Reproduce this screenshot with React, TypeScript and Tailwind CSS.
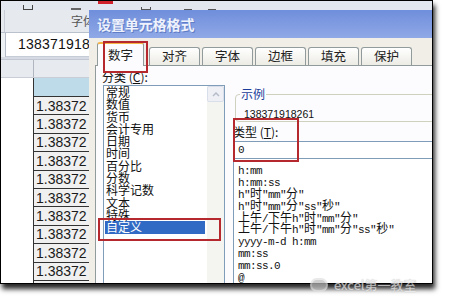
import React from 'react';

const categories = ['常规', '数值', '货币', '会计专用', '日期', '时间', '百分比', '分数', '科学记数', '文本', '特殊', '自定义'];

const formats = [
  'h:mm',
  'h:mm:ss',
  'h"时"mm"分"',
  'h"时"mm"分"ss"秒"',
  '上午/下午h"时"mm"分"',
  '上午/下午h"时"mm"分"ss"秒"',
  'yyyy-m-d h:mm',
  'mm:ss',
  'mm:ss.0',
  '@',
  '[h]:mm:ss',
];

const tabs = ['对齐', '字体', '边框', '填充', '保护'];

// mixed SimSun-like line: narrow ascii, square CJK
const FormatLine = ({ text }: { text: string }) => {
  const runs = text.match(/[\u4e00-\u9fff]+|[^\u4e00-\u9fff]+/g) || [];
  return (
    <div className="h-[11.9px] leading-[11.9px] whitespace-nowrap">
      {runs.map((r, i) =>
        /[\u4e00-\u9fff]/.test(r) ? (
          <span key={i} className="font-['Noto_Sans_CJK_SC',sans-serif] text-[12px]">
            {r}
          </span>
        ) : (
          <span key={i} className="font-['Liberation_Mono',monospace] text-[11px] tracking-[-0.6px]">
            {r}
          </span>
        )
      )}
    </div>
  );
};

const App: React.FC = () => {
  return (
    <div className="w-[454px] h-[306px] bg-white relative overflow-hidden">
      <div className="w-[433px] h-[284px] relative overflow-hidden border border-black bg-white shadow-[2px_5px_5px_rgba(0,0,0,0.85)]">
        {/* ribbon strip, mostly cut off */}
        <div className="h-[9px] bg-[#e2e7ef] flex items-end overflow-hidden text-[#333]">
          <div className="ml-[22px] w-[10px] h-[5px] border border-[#444] border-t-0" />
          <div className="ml-[38px] w-[10px] h-[4px] border-b-2 border-[#666]" />
          <div className="ml-[17px] w-[15px] h-[9px] flex flex-col justify-start">
            <div className="h-[3px] bg-[#d0202a]" />
          </div>
          <div className="ml-[28px] w-[10px] h-[3px] border-b border-l border-r border-[#555]" />
          <div className="ml-[33px] w-[8px] h-[4px] border-b border-[#555]" />
          <div className="ml-[16px] w-[8px] h-[4px] border-b border-[#555]" />
        </div>
        {/* group label row */}
        <div className="h-[23px] bg-[#e6e9ee] flex items-center border-b border-[#b9c1cd]">
          <div className="w-[4px] h-full border-r border-[#c9ced6]" />
          <span className="ml-[66px] font-['Noto_Sans_CJK_SC',sans-serif] text-[12px] text-[#555] leading-none">字体</span>
        </div>
        {/* formula bar */}
        <div className="h-[24px] bg-[#eef1f4] flex">
          <div className="w-[5px] border-r border-[#b5bcc8]" />
          <div className="flex-1 bg-white flex items-center pl-[12px] border-b border-[#c6ccd6]">
            <span className="font-['Liberation_Sans',Arial,sans-serif] text-[14px] text-[#111] tracking-[0.2px]">138371918261</span>
          </div>
        </div>
        <div className="h-[2px] bg-[#d6dbe3]" />
        {/* header row */}
        <div className="h-[18px] bg-[#e7eaef] flex border-t border-[#c2c8d2]">
          <div className="w-[33px] border-r border-[#b0b6c0]" />
        </div>
        <div className="h-[19px] flex border-t border-[#c9ced6]">
          <div className="w-[33px] bg-white border-r border-[#333]" />
          <div className="w-[56px] bg-[#bddbe8]" />
        </div>
        {/* cells */}
        {Array.from({ length: 11 }).map((_, i) => (
          <div key={i} className="h-[18.4px] flex">
            <div className="w-[33px] bg-white border-r border-[#333]" />
            <div className="w-[56px] bg-[#f0f0f0] border-t border-[#333] flex items-center pl-[2px] overflow-hidden">
              <span className="font-['Liberation_Sans',Arial,sans-serif] text-[14px] text-[#1a1a1a] leading-none">1.38372</span>
            </div>
          </div>
        ))}

        {/* dialog window */}
        <div className="absolute left-[88px] top-[9px] w-[346px] h-[276px] flex flex-col">
          <div className="h-[28px] shrink-0 bg-gradient-to-b from-[#6f8edb] to-[#90a8e6] flex items-center pl-[8px]">
            <span className="font-['Noto_Sans_CJK_SC',sans-serif] text-[14px] font-bold text-[#eef2fc] tracking-[-0.1px] [text-shadow:1px_1px_0_#5f7cc6]">
              设置单元格格式
            </span>
          </div>
          <div className="flex-1 min-h-0 flex">
            <div className="w-[4px] bg-[#a6b1e4]" />
            <div className="flex-1 min-h-0 bg-[#f0eee6] flex flex-col">
              {/* tab strip */}
              <div className="h-[27px] shrink-0 flex items-end pl-[8px] font-['Noto_Sans_CJK_SC',sans-serif] text-[12.5px] text-[#222]">
                <div className="w-[47px] h-[24px] bg-[#fcfcfe] border border-b-0 border-[#919b9c] border-t-2 border-t-[#f5b445] rounded-t-[3px] flex items-center justify-center relative top-[1px]">
                  数字
                </div>
                {tabs.map((t, i) => (
                  <div
                    key={t}
                    className={`h-[18px] w-[51px] bg-gradient-to-b from-white to-[#ecebe4] border border-b-0 border-[#919b9c] rounded-t-[3px] flex items-center justify-center ${
                      i === 0 ? 'ml-[5px]' : 'ml-[2px]'
                    }`}
                  >
                    {t}
                  </div>
                ))}
              </div>
              {/* tab panel */}
              <div className="flex-1 min-h-0 overflow-hidden ml-[6px] bg-[#fcfcfe] border-l border-t border-[#919b9c] flex pl-[6px] pt-[4px] font-['Noto_Sans_CJK_SC',sans-serif] text-[#111]">
                <div className="w-[123px] shrink-0 flex flex-col">
                  <div className="text-[12px] leading-[14px]">
                    分类 (<span className="underline">C</span>):
                  </div>
                  <div className="mt-[1px] ml-[1px] flex-1 border border-[#7f9db9] bg-white flex">
                    <div className="flex-1 text-[12px] leading-[12.3px] pl-[1px]">
                      {categories.map((c) => (
                        <div
                          key={c}
                          className={`h-[12.3px] pl-[1px] whitespace-nowrap ${
                            c === '自定义' ? 'bg-[#316ac5] text-white' : ''
                          }`}
                        >
                          {c}
                        </div>
                      ))}
                    </div>
                    <div className="w-[17px] bg-[#f4f4f0] flex flex-col ml-[2px]">
                      <div className="h-[16px] bg-[#eef0f5] border border-[#d9dfea] rounded-[2px] flex items-center justify-center">
                        <svg width="8" height="5" viewBox="0 0 8 5">
                          <path d="M1 4 L4 1 L7 4" stroke="#b6bdca" strokeWidth="1.5" fill="none" />
                        </svg>
                      </div>
                    </div>
                  </div>
                </div>

                <div className="ml-[8px] flex-1 flex flex-col">
                  <fieldset className="mt-[17px] ml-[2px] w-[200px] shrink-0 border border-[#d0d0bf] rounded-[4px] px-0 pb-0">
                    <legend className="ml-[4px] px-[1px] text-[12px] leading-[14px] text-[#1a3d9a]">示例</legend>
                    <div className="mt-[6px] pl-[8px] font-['Liberation_Sans',Arial,sans-serif] text-[10.5px] leading-[14px] text-[#111]">
                      138371918261
                    </div>
                  </fieldset>
                  <div className="mt-[3px] text-[12px] leading-[14px]">
                    类型 (<span className="underline">T</span>):
                  </div>
                  <div className="mt-[2px] h-[18px] shrink-0 w-[200px] border border-[#7f9db9] bg-white flex items-center pl-[4px] font-['Liberation_Mono',monospace] text-[11px]">
                    0
                  </div>
                  <div className="w-[200px] flex-1 border border-t-0 border-[#7f9db9] bg-white pl-[4px] pt-[3px] text-[#111]">
                    {formats.map((f) => (
                      <FormatLine key={f} text={f} />
                    ))}
                  </div>
                </div>
              </div>
            </div>
          </div>
        </div>

        {/* red annotation boxes */}
        <div className="absolute left-[102px] top-[40px] w-[45px] h-[32px] border-2 border-[#b4282e]" />
        <div className="absolute left-[232px] top-[117px] w-[66px] h-[44px] border-2 border-[#b4282e]" />
        <div className="absolute left-[97px] top-[217px] w-[123px] h-[23px] border-2 border-[#b4282e]" />
      </div>

      {/* watermark */}
      <div className="absolute left-[310px] top-[275px] flex items-center gap-[6px] opacity-70">
        <div className="w-[18px] h-[14px] rounded-full border-2 border-[#e0e0e0] bg-[#bbb]" />
        <span className="font-['Noto_Sans_CJK_SC',sans-serif] text-[13px] text-[#eeeeee] [text-shadow:0_0_1px_#888]">excel第一教室</span>
      </div>
    </div>
  );
};

export default App;
